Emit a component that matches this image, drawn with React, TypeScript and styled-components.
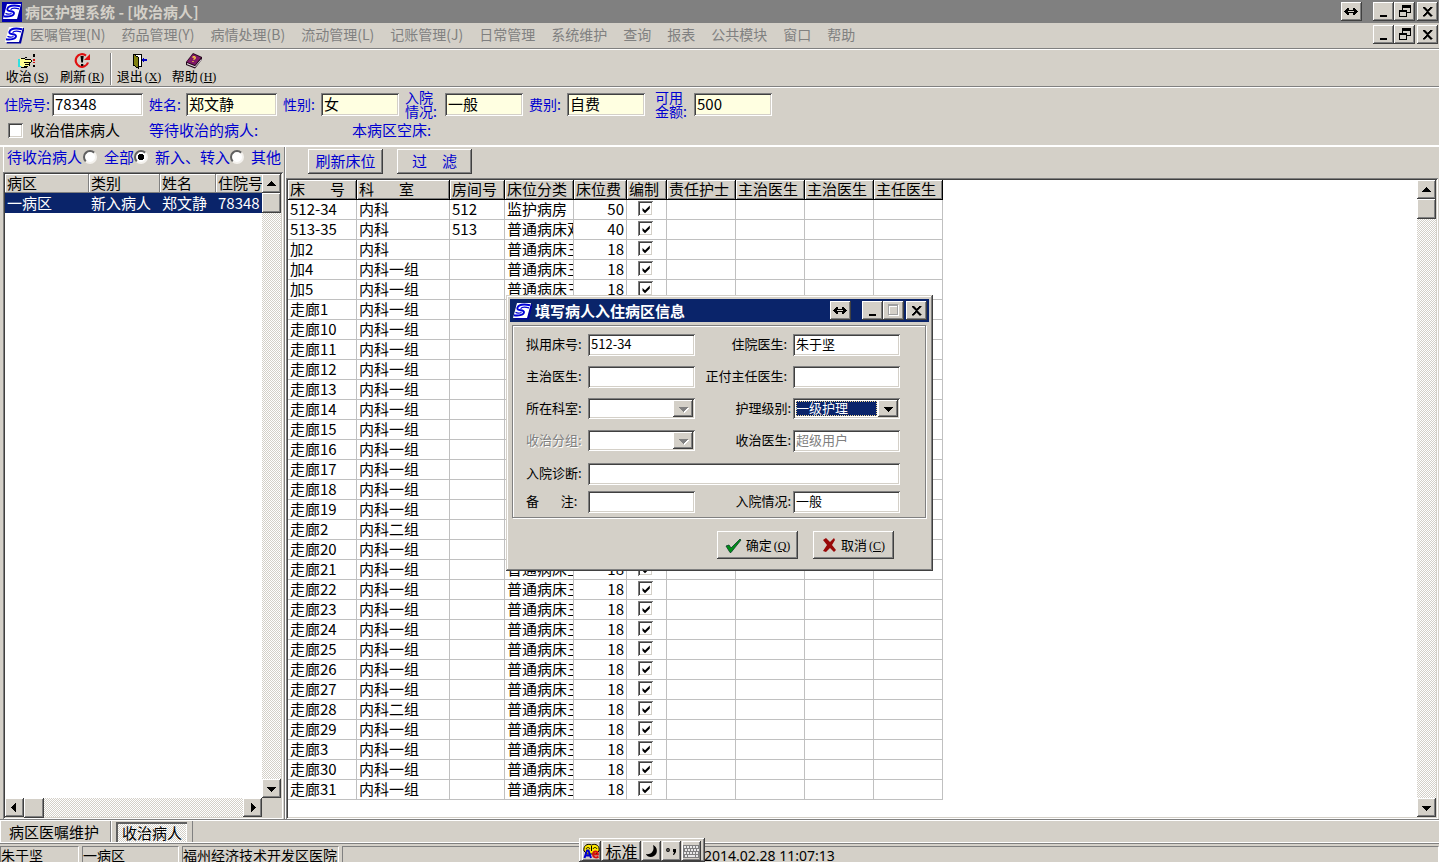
import React from "react";
import styled, { createGlobalStyle, css } from "styled-components";

const face = "#d4d0c8";
const navy = "#0a246a";
const ink = "#0000d0";

const raised = css`
  background: ${face};
  box-shadow: inset -1px -1px #404040, inset 1px 1px #fff, inset -2px -2px #808080;
`;
const sunken = css`
  box-shadow: inset 1px 1px #808080, inset -1px -1px #fff, inset 2px 2px #404040,
    inset -2px -2px ${face};
`;

const Global = createGlobalStyle`
  *, *::before, *::after { box-sizing: border-box; }
  body {
    margin: 0;
    background: ${face};
    color: #000;
    font: 15px/20px "Noto Sans CJK SC", sans-serif;
  }
  button, input, select { font: inherit; color: inherit; border: 0; padding: 0; margin: 0; border-radius: 0; }
`;

const Page = styled.div`
  position: relative;
  display: flex;
  flex-direction: column;
  height: 100vh;
  overflow: hidden;
  white-space: nowrap;
`;

/* ---------- window frame ---------- */
const TitleBar = styled.header`
  display: flex;
  align-items: center;
  flex: none;
  height: 23px;
  padding: 0 1px 0 2px;
  gap: 3px;
  background: #808080;
  color: ${face};
`;
const TitleText = styled.h1`
  flex: 1;
  margin: 0;
  font-size: 15px;
  line-height: 20px;
  font-weight: 700;
`;
const Controls = styled.div`
  display: flex;
  flex: none;
`;
const ControlButton = styled.button<{ $before?: number }>`
  ${raised}
  display: grid;
  place-items: center;
  width: 21px;
  height: 19px;
  margin-left: ${(p) => p.$before ?? 0}px;
`;
const MenuBar = styled.nav`
  display: flex;
  align-items: center;
  flex: none;
  height: 26px;
  padding: 0 1px 2px 4px;
  gap: 6px;
  border-bottom: 1px solid #808080;
`;
const MenuItems = styled.ul`
  display: flex;
  flex: 1;
  gap: 16px;
  margin: 0;
  padding: 0 0 2px;
  list-style: none;
`;
const MenuButton = styled.button`
  display: block;
  background: none;
  color: #808080;
  font-size: 14px;
  line-height: 20px;
`;

/* ---------- toolbar ---------- */
const Toolbar = styled.div`
  display: flex;
  flex: none;
  height: 38px;
  padding-top: 3px;
  border-top: 1px solid #fff;
  border-bottom: 1px solid #808080;
`;
const ToolButton = styled.button`
  display: flex;
  flex-direction: column;
  align-items: center;
  width: 55px;
  padding-right: 1px;
  background: none;
  font-size: 13px;
  line-height: 14px;
`;
const ToolSeparator = styled.div`
  width: 2px;
  height: 32px;
  border-left: 1px solid #808080;
  border-right: 1px solid #fff;
`;
const Mnemonic = styled.span`
  padding-left: 2px;
  font-family: "Liberation Serif", serif;
  font-size: 12px;
`;

/* ---------- patient form ---------- */
const PatientForm = styled.form`
  flex: none;
  height: 58px;
  border-top: 1px solid #fff;
`;
const FieldRow = styled.div`
  display: flex;
  align-items: center;
  gap: 6px;
  height: 32px;
  padding-left: 4px;
`;
const Field = styled.div<{ $before?: number }>`
  display: flex;
  align-items: center;
  margin-left: ${(p) => p.$before ?? 0}px;
`;
const FieldLabel = styled.label<{ $width: number }>`
  width: ${(p) => p.$width}px;
  color: ${ink};
  font-size: 14px;
  line-height: 14px;
  white-space: pre-line;
`;
const FieldInput = styled.input<{ $width: number; $tint?: boolean }>`
  ${sunken}
  width: ${(p) => p.$width}px;
  height: 23px;
  padding: 0 3px 2px;
  background: ${(p) => (p.$tint ? "#ffffe1" : "#fff")};
  font-size: 15px;
`;
const SummaryRow = styled.div`
  display: flex;
  align-items: center;
  height: 20px;
  padding-left: 8px;
`;
const CheckLabel = styled.label`
  display: flex;
  align-items: center;
  gap: 7px;
  width: 141px;
`;
const Check = styled.input<{ $size: number }>`
  ${sunken}
  appearance: none;
  display: block;
  width: ${(p) => p.$size}px;
  height: ${(p) => p.$size}px;
  background: #fff;
  &:checked {
    background: #fff
      url("data:image/svg+xml,%3Csvg xmlns='http://www.w3.org/2000/svg' viewBox='0 0 14 14'%3E%3Cpath d='M3.5 6v2.8L6 11.2l4.800-4.700V3.500L6 8.300z'/%3E%3C/svg%3E")
      center / 14px 14px no-repeat;
  }
`;
const Summary = styled.span<{ $width: number }>`
  width: ${(p) => p.$width}px;
  color: ${ink};
`;

/* ---------- work area ---------- */
const Work = styled.main`
  display: flex;
  flex: 1;
  min-height: 0;
  border-top: 2px solid #fff;
`;
const QueuePanel = styled.section`
  display: flex;
  flex-direction: column;
  flex: none;
  width: 285px;
  padding: 0 1px 0 3px;
  border-right: 1px solid #808080;
`;
const QueueFilter = styled.fieldset`
  display: flex;
  align-items: center;
  flex: none;
  height: 25px;
  margin: 0;
  padding: 0 0 4px 3px;
  border: 0;
  border-left: 1px solid #fff;
  color: ${ink};
`;
const FilterCaption = styled.span`
  padding-right: 1px;
`;
const RadioLabel = styled.label`
  display: flex;
  align-items: center;
  gap: 7px;
`;
const Radio = styled.input`
  appearance: none;
  width: 14px;
  height: 14px;
  border: 2px solid;
  border-color: #606060 #f4f2ee #f4f2ee #606060;
  border-radius: 50%;
  background: #fff;
  &:checked {
    background: radial-gradient(circle, #000 0 3px, #fff 3px);
  }
`;
const SunkenPane = styled.div`
  display: grid;
  grid-template-columns: minmax(0, 1fr) 19px;
  grid-template-rows: minmax(0, 1fr) auto;
  flex: 1;
  min-height: 0;
  padding: 2px;
  background: ${face};
  ${sunken}
`;
const PaneView = styled.div`
  min-width: 0;
  min-height: 0;
  overflow: hidden;
  background: #fff;
`;
const QueueTable = styled.table`
  width: 277px;
  table-layout: fixed;
  border-collapse: separate;
  border-spacing: 0;
  th,
  td {
    height: 19px;
    padding: 0 2px;
    text-align: left;
    font-weight: 400;
    line-height: 16px;
  }
  th {
    padding-bottom: 2px;
    background: ${face};
    box-shadow: inset -1px -1px #808080, inset 1px 1px #fff;
  }
  td {
    height: 20px;
    background: ${navy};
    color: #fff;
  }
`;
const track = css`
  background: repeating-conic-gradient(#fff 0 25%, ${face} 0 50%) 0 0 / 2px 2px;
`;
const VScroll = styled.div`
  ${track}
  display: flex;
  flex-direction: column;
`;
const HScroll = styled.div`
  ${track}
  display: flex;
  height: 19px;
`;
const ScrollButton = styled.button<{ $end?: boolean }>`
  ${raised}
  display: grid;
  place-items: center;
  flex: none;
  width: 19px;
  height: 19px;
  margin: ${(p) => (p.$end ? "auto 0 0 auto" : "0")};
`;
const Thumb = styled.div`
  ${raised}
  flex: none;
  width: 20px;
  height: 20px;
  max-width: 100%;
`;

const BedPanel = styled.section`
  display: flex;
  flex-direction: column;
  flex: 1;
  min-width: 0;
  padding: 0 1px 0 0;
  border-left: 1px solid #fff;
`;
const BedActions = styled.div`
  display: flex;
  flex: none;
  gap: 14px;
  height: 31px;
  padding: 2px 0 0 22px;
`;
const ActionButton = styled.button`
  ${raised}
  width: 75px;
  height: 25px;
  padding-bottom: 2px;
  color: ${ink};
`;
const BedTable = styled.table`
  width: 655px;
  table-layout: fixed;
  border-collapse: separate;
  border-spacing: 0;
  th,
  td {
    height: 20px;
    padding: 0 0 1px 2px;
    text-align: left;
    font-weight: 400;
    line-height: 18px;
    border-right: 1px solid #c0c0c0;
    border-bottom: 1px solid #c0c0c0;
  }
  th {
    padding-bottom: 2px;
    line-height: 17px;
    background: ${face};
    border-color: #000;
    box-shadow: inset 1px 1px #fff, inset -1px -1px #808080;
    white-space: pre;
  }
`;
const KindCell = styled.td`
  overflow-x: clip;
`;
const FeeCell = styled.td`
  && {
    padding-right: 2px;
    text-align: right;
  }
`;
const CheckCell = styled.td`
  && {
    padding: 0 0 2px 11px;
  }
`;

/* ---------- bottom bars ---------- */
const TabStrip = styled.div`
  display: flex;
  flex: none;
  height: 24px;
  padding-top: 1px;
  border-top: 1px solid #808080;
  border-bottom: 1px solid #fff;
  box-shadow: inset 0 1px #fff;
`;
const TabSlot = styled.div`
  display: flex;
  padding: 1px 5px 0 4px;
  border-left: 1px solid #fff;
  border-right: 1px solid #808080;
`;
const Tab = styled.button<{ $active?: boolean }>`
  padding: 0 6px 0 4px;
  line-height: 18px;
  background: none;
  ${(p) =>
    p.$active &&
    css`
      ${track}
      padding: 1px 5px 0 6px;
      box-shadow: inset 2px 2px #606060, inset -1px 0 #fff;
    `}
`;
const StatusBar = styled.footer`
  display: flex;
  flex: none;
  gap: 3px;
  height: 19px;
  padding-top: 2px;
  border-top: 1px solid #808080;
`;
const StatusCell = styled.div<{ $width?: number }>`
  flex: ${(p) => (p.$width ? "none" : "1")};
  width: ${(p) => (p.$width ? p.$width + "px" : "auto")};
  height: 16px;
  border: 1px solid #808080;
  border-right-color: #fff;
  border-bottom: 0;
  font-size: 14px;
  line-height: 16px;
`;
const Clock = styled.time`
  padding-left: 361px;
  font-family: "Noto Sans", sans-serif;
`;
const ImeBar = styled.div`
  ${raised}
  position: absolute;
  left: 579px;
  bottom: 0;
  display: flex;
  gap: 1px;
  height: 24px;
  padding: 3px 4px 1px 3px;
`;
const ImeButton = styled.button<{ $wide?: boolean }>`
  ${raised}
  display: grid;
  place-items: center;
  width: ${(p) => (p.$wide ? 39 : 19)}px;
  height: 20px;
  font-size: 16px;
  line-height: 18px;
`;

/* ---------- admission dialog ---------- */
const Dialog = styled.section`
  position: absolute;
  top: 295px;
  left: 0;
  right: 0;
  width: 427px;
  height: 276px;
  margin: 0 auto;
  padding: 4px;
  background: ${face};
  box-shadow: inset -1px -1px #404040, inset 1px 1px ${face}, inset -2px -2px #808080,
    inset 2px 2px #fff;
  font-size: 13px;
`;
const DialogTitle = styled.div`
  display: flex;
  align-items: center;
  height: 23px;
  padding: 0 2px;
  gap: 3px;
  background: ${navy};
  color: #fff;
`;
const DialogGroup = styled.div`
  display: grid;
  grid-template-columns: 62px 107px 98px 107px;
  grid-template-rows: 32px 32px 32px 33px 28px 22px;
  height: 193px;
  margin: 3px 3px 0 2px;
  padding: 8px 0 0 13px;
  border: 1px solid #808080;
  box-shadow: inset 1px 1px #fff, 1px 1px #fff;
`;
const DialogLabel = styled.label<{ $align?: "end" | "flush"; $off?: boolean }>`
  line-height: 20px;
  white-space: pre;
  text-align: ${(p) => (p.$align ? "right" : "left")};
  padding-right: ${(p) => (p.$align === "end" ? 6 : p.$align === "flush" ? 2 : 0)}px;
  ${(p) => p.$off && css`color: #808080; text-shadow: 1px 1px #fff;`}
`;
const DialogInput = styled.input<{ $span?: boolean }>`
  ${sunken}
  width: 100%;
  height: 22px;
  padding: 0 3px 3px;
  background: #fff;
  font-size: 13px;
  grid-column: ${(p) => (p.$span ? "span 3" : "auto")};
  &:disabled {
    color: #808080;
  }
`;
const Combo = styled.div`
  ${sunken}
  display: flex;
  height: 21px;
  padding: 2px;
  background: #fff;
`;
const ComboSelect = styled.select<{ $focused?: boolean }>`
  appearance: none;
  flex: 1;
  min-width: 0;
  margin: 1px;
  padding-bottom: 1px;
  background: #fff;
  opacity: 1;
  line-height: 14px;
  ${(p) =>
    p.$focused &&
    css`
      background: ${navy};
      color: #fff;
      outline: 1px dotted #f5db95;
      outline-offset: -1px;
    `}
`;
const ComboArrow = styled.span`
  ${raised}
  display: grid;
  place-items: center;
  width: 20px;
  pointer-events: none;
`;
const DialogActions = styled.div`
  display: flex;
  justify-content: flex-end;
  gap: 15px;
  padding: 13px 35px 0 0;
`;
const DialogButton = styled.button`
  ${raised}
  display: flex;
  align-items: center;
  justify-content: center;
  gap: 4px;
  width: 81px;
  height: 28px;
`;

/* ---------- drawings ---------- */
const Logo = ({ boxed }: { boxed?: boolean }) => (
  <svg width="20" height="20" viewBox="0 0 20 20" aria-hidden="true">
    {boxed && <rect width="20" height="20" fill="#0000b0" />}
    <path d="M7 3H20.500L17 18.500H2.500Z" fill="#0000a0" />
    <path d="M5 2H19L15 17H1Z" fill="#fff" />
    <path
      d="M18 4.200C12 3 6.500 3.600 5.300 7C4.600 10.300 12.500 8.300 12 11.300C11.500 14.300 6 15 2 14.300"
      fill="none"
      stroke="#0000d8"
      strokeWidth="1.900"
    />
    <path
      d="M17 6.800C13 5.800 9.500 6.200 8.600 7.800M9.500 11.500C7.500 12.300 5 12.300 3.500 11.300"
      fill="none"
      stroke="#0000d8"
      strokeWidth="1.200"
    />
  </svg>
);
const Glyph = ({ kind, muted }: { kind: string; muted?: boolean }) => (
  <svg width="15" height="13" viewBox="0 0 15 13" shapeRendering="crispEdges" aria-hidden="true">
    {kind === "swap" && (
      <path d="M0 6h1V5h1V4h1V3h2v2h4V3h2v1h1v1h1v1h1v1h-1v1h-1v1h-1v1H9V8H5v2H3V9H2V8H1V7H0z M4 6v1h6V6z" fillRule="evenodd" />
    )}
    {kind === "min" && <path d="M4 10h7v2H4z" />}
    {kind === "restore" && (
      <path d="M5 0h9v8h-4V7h3V3H6v2H5z M2 5h8v7H2z M3 7v4h6V7z" fillRule="evenodd" />
    )}
    {kind === "max" && (
      <>
        <path d="M3 1h10v11H3z M4 3v8h8V3z" fill="#fff" fillRule="evenodd" />
        <path d="M2 0h10v11H2z M3 2v8h8V2z" fill={muted ? "#a0a0a0" : "#000"} fillRule="evenodd" />
      </>
    )}
    {kind === "close" && (
      <path d="M3 2h2v1h1v1h1v1h1V4h1V3h1V2h2v1h-1v1h-1v1H9v1H8v1h1v1h1v1h1v1h1v1h-2v-1H9V9H8V8H7v1H6v1H5v1H3v-1h1V9h1V8h1V7h1V6H6V5H5V4H4V3H3z" stroke="#000" strokeWidth=".5" />
    )}
  </svg>
);
const Arrow = ({ dir, muted }: { dir: "up" | "down" | "left" | "right"; muted?: boolean }) => {
  const shapes = {
    up: "M5 3h1v1h1v1h1v1h1v1h1v1H1V7h1V6h1V5h1V4h1z",
    down: "M1 4h9v1H9v1H8v1H7v1H6v1H5V8H4V7H3V6H2V5H1z",
    left: "M7 1v9H6V9H5V8H4V7H3V6H2V5h1V4h1V3h1V2h1V1z",
    right: "M4 1v9h1V9h1V8h1V7h1V6h1V5H8V4H7V3H6V2H5V1z",
  };
  return (
    <svg width="11" height="11" viewBox="0 0 11 11" shapeRendering="crispEdges" aria-hidden="true">
      {muted && <path d={shapes[dir]} fill="#fff" transform="translate(1 1)" />}
      <path d={shapes[dir]} fill={muted ? "#808080" : "#000"} />
    </svg>
  );
};
const HandIcon = () => (
  <svg width="18" height="16" viewBox="0 0 18 16" shapeRendering="crispEdges" aria-hidden="true">
    <path d="M0 6h3v8H0z" fill="#30e0e0" />
    <path d="M2 5h5v1h6v3h-2v4h-1v1H4v-1H2z" fill="#ffff90" />
    <path d="M3 5h4v1H3zM7 4h2v1H7zM7 6h6v1H7zM13 7h1v2h-1zM6 9h7v1H6zM7 11h4v1H7zM6 13h4v1H6zM3 14h6v1H3zM11 10h1v3h-1z" />
    <path d="M15 1h2v3h-2zM15 12h2v2h-2z" />
    <path d="M15 6h2v2h-2zM15 9h2v1h-2z" fill="#d01010" />
  </svg>
);
const RefreshIcon = () => (
  <svg width="17" height="16" viewBox="0 0 17 16" aria-hidden="true">
    <path d="M12 2.600A6.300 6.300 0 1 0 14 9.500" fill="none" stroke="#e01010" strokeWidth="2.200" />
    <path d="M16 1v6H10z" fill="#e01010" />
    <path d="M6.500 3h3.200L8.900 9.500H7.300z M7 11h2.300v2H7z" />
  </svg>
);
const ExitIcon = () => (
  <svg width="16" height="16" viewBox="0 0 16 16" shapeRendering="crispEdges" aria-hidden="true">
    <path d="M2 1h8v12H7" fill="#fff" stroke="#000" />
    <path d="M2 1l5 3v11l-5-3z" fill="#808010" stroke="#000" />
    <path d="M10 7l3-3v2h3v2h-3v2z" fill="#0000c0" />
  </svg>
);
const BookIcon = () => (
  <svg width="18" height="16" viewBox="0 0 18 16" aria-hidden="true">
    <path d="M1 9L8 0l9 4v2.500L10 15.500 1 12z" fill="#200818" />
    <path d="M1.800 9L8 1l8 3.500L10 12z" fill="#801868" />
    <path d="M2 10l8 3.300 6.500-7.500V7L10 14.300 2 11.300z" fill="#e8e0e8" />
    <path d="M7.500 4.500C9 3 11 4 10 5.500L8.500 6.500M8 8v1" fill="none" stroke="#ffd840" strokeWidth="1.300" />
  </svg>
);
const OkIcon = () => (
  <svg width="17" height="17" viewBox="0 0 17 17" aria-hidden="true">
    <path d="M1 9l3-1 2 3 9-9 1 1L6 15.500H5z" fill="#009018" stroke="#0a3c28" strokeWidth=".8" />
  </svg>
);
const CancelIcon = () => (
  <svg width="15" height="16" viewBox="0 0 15 16" aria-hidden="true">
    <path d="M1 3l3-2 4 4 4-4 1 2-3 5 4 5-2 2-4-4-4 4-3-1 4-6z" fill="#980808" />
  </svg>
);
const ImeIcon = () => (
  <svg width="17" height="16" viewBox="0 0 17 16" aria-hidden="true">
    <path d="M1 8C0 3 4 0 8.500 2C13 0 17 3 16 8l-3 3H4z" fill="#ffe800" stroke="#000" />
    <path d="M3 6c1-2 3-2 4 0M10 6c1-2 3-2 4 0M8.500 3v5" fill="none" stroke="#000" />
    <path d="M1.500 15L4 7.500h1.500L8 15M3 12.500h4" fill="none" stroke="#0000d0" strokeWidth="2" />
    <path d="M10 11.500h5C15 7.500 10 7.500 10 11.500c0 3.500 4 3.500 5.500 2" fill="none" stroke="#d81010" strokeWidth="1.800" />
  </svg>
);
const MoonIcon = () => (
  <svg width="13" height="14" viewBox="0 0 13 14" aria-hidden="true">
    <path d="M8 1c5 2 5 9 1 11-3 2-7 1-8-2 5 1 9-3 7-9z" />
  </svg>
);
const PunctuationIcon = () => (
  <svg width="13" height="10" viewBox="0 0 13 10" aria-hidden="true">
    <circle cx="3" cy="4" r="1.300" fill="none" stroke="#000" strokeWidth="1.200" />
    <path d="M8 3h3v3l-2 3H8l1-3H8z" />
  </svg>
);
const KeyboardIcon = () => (
  <svg width="17" height="13" viewBox="0 0 17 13" shapeRendering="crispEdges" aria-hidden="true">
    <rect width="17" height="13" fill="#808080" />
    <path d="M1 2h15M1 8h15" stroke="#e8e8e8" strokeWidth="2" strokeDasharray="2 1" />
    <path d="M2 5h14" stroke="#e8e8e8" strokeWidth="2" strokeDasharray="2 1" />
    <path d="M2 11h2m1 0h7m1 0h2" stroke="#e8e8e8" strokeWidth="2" />
  </svg>
);

/* ---------- data ---------- */
const menus = ["医嘱管理(N)", "药品管理(Y)", "病情处理(B)", "流动管理(L)", "记账管理(J)", "日常管理", "系统维护", "查询", "报表", "公共模块", "窗口", "帮助"];
const fields = [
  { id: "no", label: "住院号:", value: "78348", lw: 48, w: 91, plain: true },
  { id: "name", label: "姓名:", value: "郑文静", lw: 37, w: 91 },
  { id: "sex", label: "性别:", value: "女", lw: 38, w: 78 },
  { id: "state", label: "入院\n情况:", value: "一般", lw: 40, w: 78 },
  { id: "pay", label: "费别:", value: "自费", lw: 38, w: 78 },
  { id: "fund", label: "可用\n金额:", value: "500", lw: 39, w: 78, before: 4 },
];
const bedColumns: [string, number][] = [
  ["床　   号", 69], ["科　   室", 93], ["房间号", 55], ["床位分类", 69], ["床位费", 53],
  ["编制", 40], ["责任护士", 69], ["主治医生", 69], ["主治医生", 69], ["主任医生", 69],
];
const beds = [
  ["512-34", "内科", "512", "监护病房", "50"],
  ["513-35", "内科", "513", "普通病床双", "40"],
  ["加2", "内科", "", "普通病床三", "18"],
  ...["加4", "加5", "走廊1", "走廊10", "走廊11", "走廊12", "走廊13", "走廊14", "走廊15", "走廊16", "走廊17", "走廊18", "走廊19", "走廊2", "走廊20", "走廊21", "走廊22", "走廊23", "走廊24", "走廊25", "走廊26", "走廊27", "走廊28", "走廊29", "走廊3", "走廊30", "走廊31"].map(
    (bed) => [bed, bed === "走廊2" || bed === "走廊28" ? "内科二组" : "内科一组", "", "普通病床三", "18"]
  ),
];

const Key = ({ k }: { k: string }) => (
  <Mnemonic>
    (<u>{k}</u>)
  </Mnemonic>
);

const Tool = ({ icon, text, k }: { icon: React.ReactNode; text: string; k: string }) => (
  <ToolButton type="button">
    {icon}
    <span>
      {text}
      <Key k={k} />
    </span>
  </ToolButton>
);

const VerticalScroll = () => (
  <VScroll>
    <ScrollButton type="button" aria-label="向上滚动"><Arrow dir="up" /></ScrollButton>
    <Thumb />
    <ScrollButton type="button" aria-label="向下滚动" $end><Arrow dir="down" /></ScrollButton>
  </VScroll>
);

const AdmissionDialog = () => (
  <Dialog role="dialog" aria-labelledby="dialog-title">
    <DialogTitle>
      <Logo />
      <TitleText as="h2" id="dialog-title">填写病人入住病区信息</TitleText>
      <Controls>
        <ControlButton type="button" aria-label="切换"><Glyph kind="swap" /></ControlButton>
        <ControlButton type="button" aria-label="最小化" $before={11}><Glyph kind="min" /></ControlButton>
        <ControlButton type="button" aria-label="最大化" disabled><Glyph kind="max" muted /></ControlButton>
        <ControlButton type="button" aria-label="关闭" $before={2}><Glyph kind="close" /></ControlButton>
      </Controls>
    </DialogTitle>
    <DialogGroup>
      <DialogLabel htmlFor="d-bed">拟用床号:</DialogLabel>
      <DialogInput id="d-bed" defaultValue="512-34" />
      <DialogLabel htmlFor="d-resident" $align="end">住院医生:</DialogLabel>
      <DialogInput id="d-resident" defaultValue="朱于坚" />

      <DialogLabel htmlFor="d-attending">主治医生:</DialogLabel>
      <DialogInput id="d-attending" />
      <DialogLabel htmlFor="d-chief" $align="end">正付主任医生:</DialogLabel>
      <DialogInput id="d-chief" />

      <DialogLabel htmlFor="d-dept">所在科室:</DialogLabel>
      <Combo>
        <ComboSelect id="d-dept" disabled />
        <ComboArrow><Arrow dir="down" muted /></ComboArrow>
      </Combo>
      <DialogLabel htmlFor="d-level" $align="flush">护理级别:</DialogLabel>
      <Combo>
        <ComboSelect id="d-level" $focused defaultValue="一级护理">
          <option>一级护理</option>
        </ComboSelect>
        <ComboArrow><Arrow dir="down" /></ComboArrow>
      </Combo>

      <DialogLabel htmlFor="d-group" $off>收治分组:</DialogLabel>
      <Combo>
        <ComboSelect id="d-group" disabled />
        <ComboArrow><Arrow dir="down" muted /></ComboArrow>
      </Combo>
      <DialogLabel htmlFor="d-doctor" $align="flush">收治医生:</DialogLabel>
      <DialogInput id="d-doctor" defaultValue="超级用户" disabled />

      <DialogLabel htmlFor="d-diagnosis">入院诊断:</DialogLabel>
      <DialogInput id="d-diagnosis" $span />

      <DialogLabel htmlFor="d-note">{"备　   注:"}</DialogLabel>
      <DialogInput id="d-note" />
      <DialogLabel htmlFor="d-state" $align="flush">入院情况:</DialogLabel>
      <DialogInput id="d-state" defaultValue="一般" />
    </DialogGroup>
    <DialogActions>
      <DialogButton type="button"><OkIcon /><span>确定<Key k="Q" /></span></DialogButton>
      <DialogButton type="button"><CancelIcon /><span>取消<Key k="C" /></span></DialogButton>
    </DialogActions>
  </Dialog>
);

export default function App() {
  return (
    <Page>
      <Global />
      <TitleBar>
        <Logo boxed />
        <TitleText>病区护理系统 - [收治病人]</TitleText>
        <Controls>
          <ControlButton type="button" aria-label="切换"><Glyph kind="swap" /></ControlButton>
          <ControlButton type="button" aria-label="最小化" $before={11}><Glyph kind="min" /></ControlButton>
          <ControlButton type="button" aria-label="还原"><Glyph kind="restore" /></ControlButton>
          <ControlButton type="button" aria-label="关闭" $before={2}><Glyph kind="close" /></ControlButton>
        </Controls>
      </TitleBar>
      <MenuBar>
        <Logo />
        <MenuItems>
          {menus.map((m) => (
            <li key={m}><MenuButton type="button">{m}</MenuButton></li>
          ))}
        </MenuItems>
        <Controls>
          <ControlButton type="button" aria-label="最小化子窗口"><Glyph kind="min" /></ControlButton>
          <ControlButton type="button" aria-label="还原子窗口"><Glyph kind="restore" /></ControlButton>
          <ControlButton type="button" aria-label="关闭子窗口" $before={2}><Glyph kind="close" /></ControlButton>
        </Controls>
      </MenuBar>
      <Toolbar>
        <Tool icon={<HandIcon />} text="收治" k="S" />
        <Tool icon={<RefreshIcon />} text="刷新" k="R" />
        <ToolSeparator />
        <Tool icon={<ExitIcon />} text="退出" k="X" />
        <Tool icon={<BookIcon />} text="帮助" k="H" />
      </Toolbar>
      <PatientForm>
        <FieldRow>
          {fields.map((f) => (
            <Field key={f.id} $before={f.before}>
              <FieldLabel htmlFor={f.id} $width={f.lw}>{f.label}</FieldLabel>
              <FieldInput id={f.id} $width={f.w} $tint={!f.plain} defaultValue={f.value} />
            </Field>
          ))}
        </FieldRow>
        <SummaryRow>
          <CheckLabel><Check type="checkbox" $size={15} />收治借床病人</CheckLabel>
          <Summary $width={203}>等待收治的病人:</Summary>
          <Summary $width={90}>本病区空床:</Summary>
        </SummaryRow>
      </PatientForm>
      <Work>
        <QueuePanel>
          <QueueFilter>
            <FilterCaption>待收治病人</FilterCaption>
            <RadioLabel><Radio type="radio" name="queue" />全部</RadioLabel>
            <RadioLabel><Radio type="radio" name="queue" defaultChecked />新入、转入</RadioLabel>
            <RadioLabel><Radio type="radio" name="queue" />其他</RadioLabel>
          </QueueFilter>
          <SunkenPane>
            <PaneView>
              <QueueTable>
                <colgroup>
                  <col style={{ width: 84 }} /><col style={{ width: 71 }} />
                  <col style={{ width: 56 }} /><col style={{ width: 66 }} />
                </colgroup>
                <thead>
                  <tr><th>病区</th><th>类别</th><th>姓名</th><th>住院号</th></tr>
                </thead>
                <tbody>
                  <tr><td>一病区</td><td>新入病人</td><td>郑文静</td><td>78348</td></tr>
                </tbody>
              </QueueTable>
            </PaneView>
            <VerticalScroll />
            <HScroll>
              <ScrollButton type="button" aria-label="向左滚动"><Arrow dir="left" /></ScrollButton>
              <Thumb />
              <ScrollButton type="button" aria-label="向右滚动" $end><Arrow dir="right" /></ScrollButton>
            </HScroll>
          </SunkenPane>
        </QueuePanel>
        <BedPanel>
          <BedActions>
            <ActionButton type="button">刷新床位</ActionButton>
            <ActionButton type="button">过　滤</ActionButton>
          </BedActions>
          <SunkenPane>
            <PaneView>
              <BedTable>
                <colgroup>
                  {bedColumns.map(([, w], i) => <col key={i} style={{ width: w }} />)}
                </colgroup>
                <thead>
                  <tr>{bedColumns.map(([name], i) => <th key={i}>{name}</th>)}</tr>
                </thead>
                <tbody>
                  {beds.map(([bed, dept, room, kind, fee]) => (
                    <tr key={bed}>
                      <td>{bed}</td>
                      <td>{dept}</td>
                      <td>{room}</td>
                      <KindCell>{kind}</KindCell>
                      <FeeCell>{fee}</FeeCell>
                      <CheckCell><Check type="checkbox" $size={15} defaultChecked aria-label={`${bed} 编制`} /></CheckCell>
                      <td /><td /><td /><td />
                    </tr>
                  ))}
                </tbody>
              </BedTable>
            </PaneView>
            <VerticalScroll />
          </SunkenPane>
        </BedPanel>
      </Work>
      <TabStrip>
        <TabSlot><Tab type="button">病区医嘱维护</Tab></TabSlot>
        <TabSlot><Tab type="button" $active>收治病人</Tab></TabSlot>
      </TabStrip>
      <StatusBar>
        <StatusCell $width={79}>朱于坚</StatusCell>
        <StatusCell $width={97}>一病区</StatusCell>
        <StatusCell $width={157}>福州经济技术开发区医院</StatusCell>
        <StatusCell><Clock>2014.02.28 11:07:13</Clock></StatusCell>
      </StatusBar>
      <ImeBar>
        <ImeButton type="button" aria-label="输入法"><ImeIcon /></ImeButton>
        <ImeButton type="button" $wide>标准</ImeButton>
        <ImeButton type="button" aria-label="半角"><MoonIcon /></ImeButton>
        <ImeButton type="button" aria-label="标点"><PunctuationIcon /></ImeButton>
        <ImeButton type="button" aria-label="软键盘"><KeyboardIcon /></ImeButton>
      </ImeBar>
      <AdmissionDialog />
    </Page>
  );
}
